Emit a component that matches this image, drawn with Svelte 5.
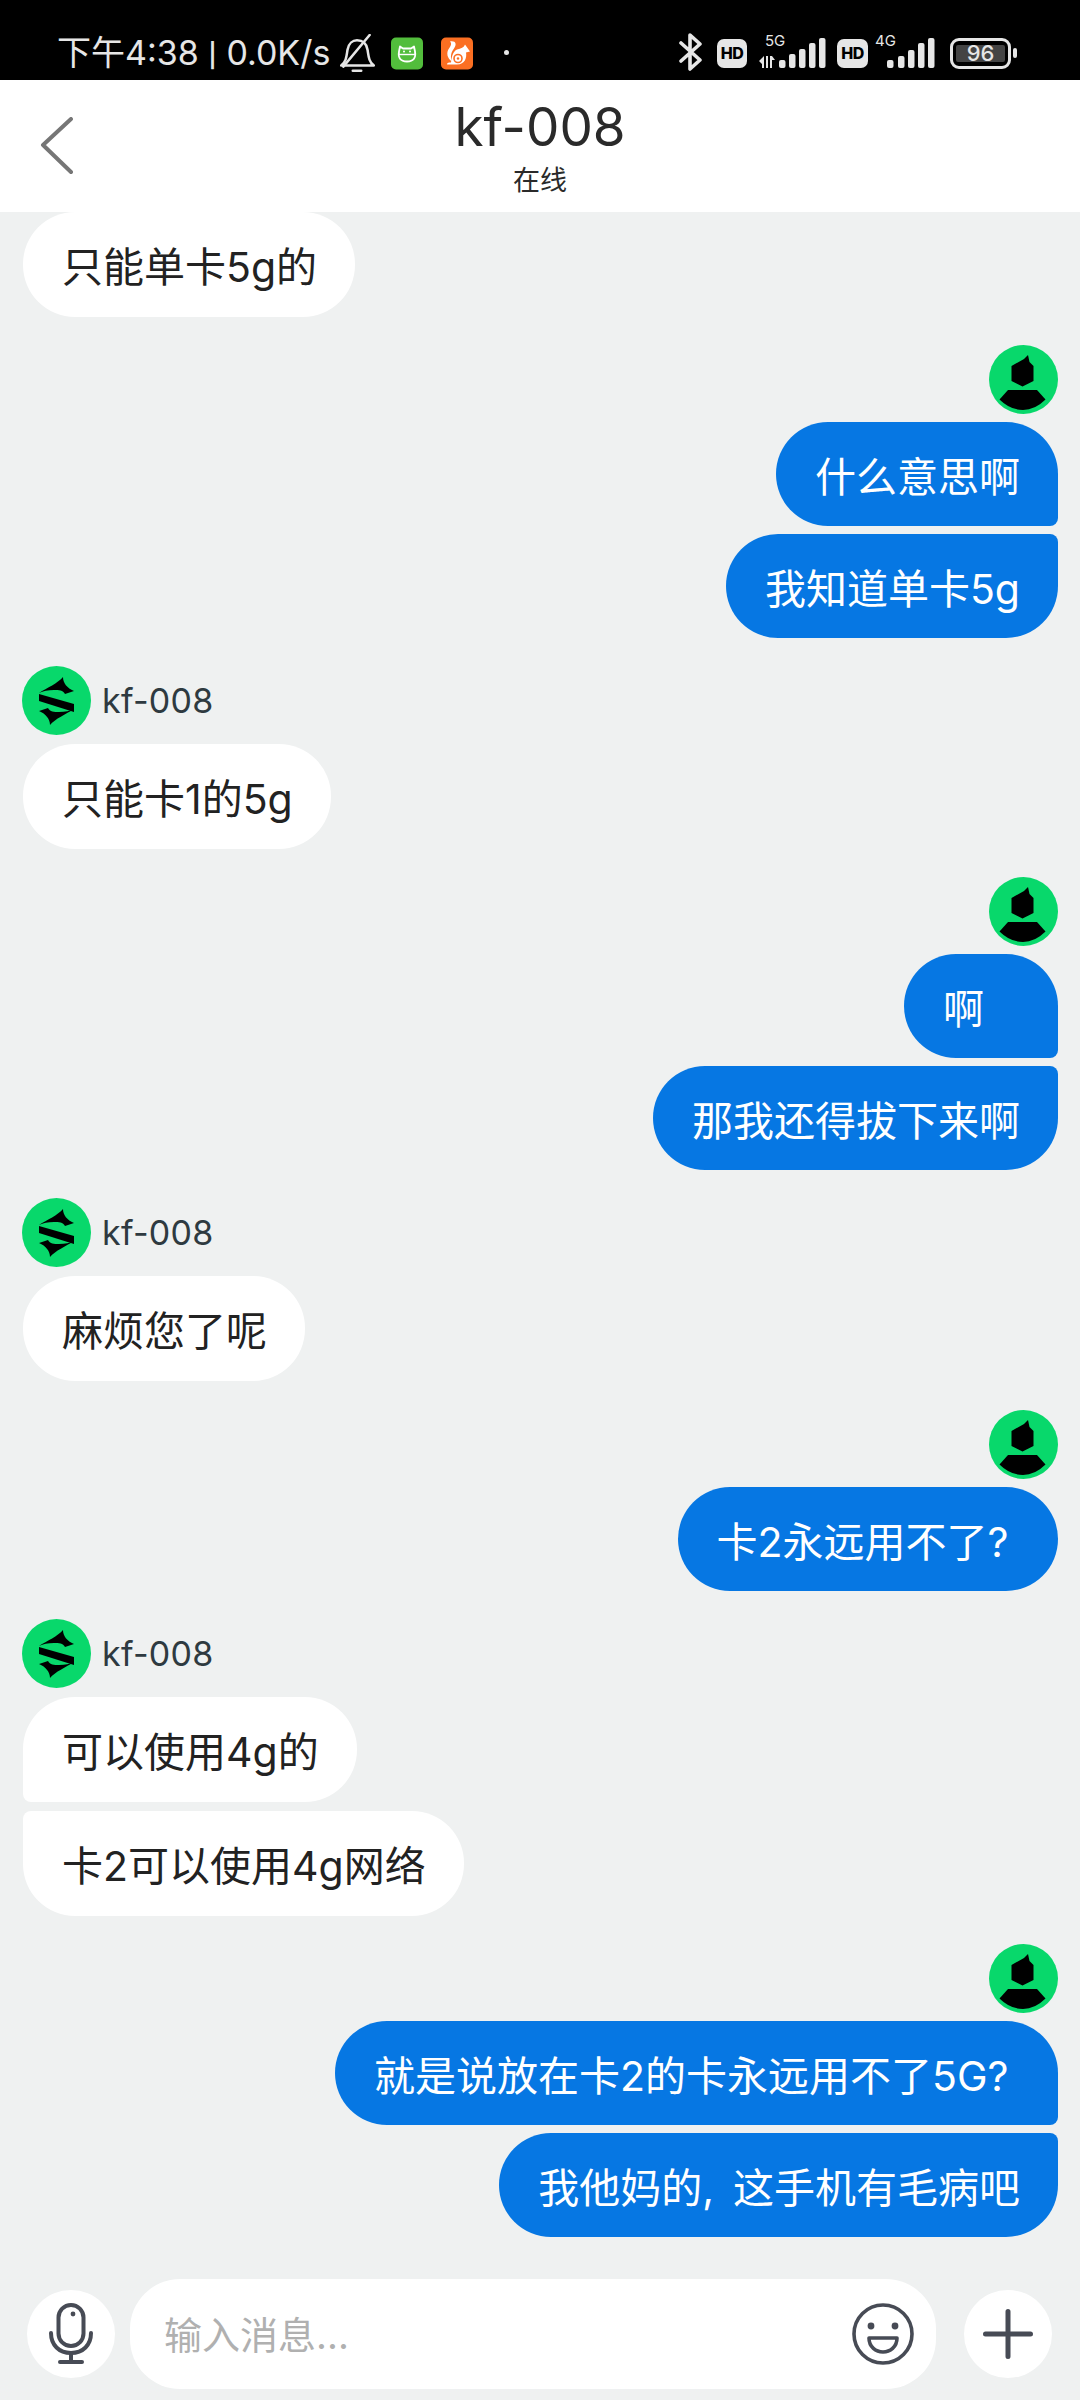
<script>
  const groups = [
    { side: "them", hideHead: true, bubbles: [{ text: "只能单卡5g的" }] },
    { side: "me", bubbles: [{ text: "什么意思啊", corner: "br" }, { text: "我知道单卡5g", corner: "tr" }] },
    { side: "them", bubbles: [{ text: "只能卡1的5g" }] },
    { side: "me", bubbles: [{ text: "啊", corner: "br" }, { text: "那我还得拔下来啊", corner: "tr" }] },
    { side: "them", bubbles: [{ text: "麻烦您了呢" }] },
    { side: "me", bubbles: [{ text: "卡2永远用不了? " }] },
    { side: "them", bubbles: [{ text: "可以使用4g的", corner: "bl" }, { text: "卡2可以使用4g网络", corner: "tl" }] },
    { side: "me", bubbles: [{ text: "就是说放在卡2的卡永远用不了5G? ", corner: "br" }, { text: "我他妈的,\u2009 这手机有毛病吧", corner: "tr" }] }
  ];

  const bars5g = [[20, 8], [30, 14], [40, 19], [50, 25], [60, 30]];
  const bars4g = [[0, 8], [11, 12], [21, 18], [31, 25], [41, 30]];
</script>

<div class="phone">
  <div class="status">
    <span class="clock">下午4:38 <span class="sep">|</span> 0.0K/s</span>
    <svg class="bell" width="36" height="40" viewBox="0 0 34 38" fill="none" stroke="#e6e6e6" stroke-width="2.4" stroke-linecap="round" stroke-linejoin="round">
      <path d="M2 30 C7 26 7 21 8 15 C9 9 13 6 17 6 C22 6 26 9 27 15 C28 21 28 26 33 30 Z" />
      <path d="M4 31 L29 1" />
      <path d="M13 35 H21" />
    </svg>
    <svg class="app app-green" width="32" height="33" viewBox="0 0 32 32">
      <rect width="32" height="32" rx="5" fill="#52bd3c" />
      <path d="M9 9 L12 11 H20 L23 9 L24 14 C25 20 23 24 16 24 C9 24 7 20 8 14 Z" fill="none" stroke="#fff" stroke-width="1.8" stroke-linejoin="round" />
      <path d="M8 17 H24" stroke="#fff" stroke-width="1.4" />
      <circle cx="13" cy="14" r="1" fill="#fff" />
      <circle cx="19" cy="14" r="1" fill="#fff" />
    </svg>
    <svg class="app app-orange" width="32" height="33" viewBox="0 0 32 32">
      <rect width="32" height="32" rx="5" fill="#fb6f22" />
      <path d="M9 4 C15 3 16 7 13 11 C10 15 9 19 11 24 C6 21 5 15 8 11 C10 8 11 6 9 4 Z" fill="#fff" />
      <path d="M16 12 C20 11 23 10 24 7 L29 14 L25 15 C26 20 24 27 16 27 H6 C6 25 8 25 10 25 C11 18 12 14 16 12 Z" fill="#fff" />
      <circle cx="17" cy="21" r="4" fill="none" stroke="#fb6f22" stroke-width="1.6" />
      <circle cx="17" cy="21" r="1.2" fill="#fb6f22" />
    </svg>
    <span class="dot"></span>
    <span class="spacer"></span>
    <svg class="bt" width="24" height="40" viewBox="0 0 24 40" fill="none" stroke="#e6e6e6" stroke-width="3.6" stroke-linejoin="round" stroke-linecap="round">
      <path d="M2 11 L21 28 L11 37 V3 L21 12 L2 29" />
    </svg>
    <span class="hd hd-first">HD</span>
    <div class="signal signal-5g">
      <span class="net">5G</span>
      <svg width="67" height="30" viewBox="0 0 67 30" fill="#e6e6e6">
        <path d="M0 23 L5 18 V30 H3 V26 Z M7 18 H9 V30 H7 Z M11 18 H13 L16 22 H13 V30 H11 Z" />
        {#each bars5g as bar}
          <rect x={bar[0]} y={30 - bar[1]} width="6.5" height={bar[1]} rx="2" />
        {/each}
      </svg>
    </div>
    <span class="hd hd-second">HD</span>
    <div class="signal signal-4g">
      <span class="net">4G</span>
      <svg width="48" height="30" viewBox="0 0 48 30" fill="#e6e6e6">
        {#each bars4g as bar}
          <rect x={bar[0]} y={30 - bar[1]} width="6.5" height={bar[1]} rx="2" />
        {/each}
      </svg>
    </div>
    <div class="battery">
      <span class="level">96</span>
    </div>
    <span class="tip"></span>
  </div>

  <header class="topbar">
    <svg class="back" width="34" height="58" viewBox="0 0 34 58" fill="none" stroke="#767676" stroke-width="4" stroke-linecap="round" stroke-linejoin="round">
      <path d="M31 2 L3 28 L31 55" />
    </svg>
    <div class="title">
      <span class="name">kf-008</span>
      <span class="state">在线</span>
    </div>
  </header>

  <div class="messages">
    {#each groups as group}
      <section class="group {group.side}">
        {#if !group.hideHead}
          <div class="head">
            {#if group.side === "me"}
              <svg class="avatar" width="69" height="69" viewBox="0 0 69 69">
                <circle cx="34.5" cy="34.5" r="34.5" fill="#08d86b" />
                <path d="M39 10 L40.5 17 L44.5 21 V36 L33.5 41.5 L22.5 36 V21 L35 14 Z" fill="#000" />
                <path d="M19 45 H48 L56.5 54.5 Q46 65 34 65 Q21 65 10.5 54.5 Z" fill="#000" />
              </svg>
            {:else}
              <svg class="avatar" width="69" height="69" viewBox="0 0 69 69">
                <circle cx="34.5" cy="34.5" r="34.5" fill="#08d86b" />
                <path d="M17 27 C25 22 36 17 41 11 C41 17 45 22 52 25 L43 28 C41 24 37 24 32 24 C26 24 21 25 17 27 Z" fill="#000" />
                <path d="M17 28 L52 38 V46 L17 35 Z" fill="#000" />
                <path d="M52 43 C44 48 33 53 28 59 C28 53 24 48 17 45 L26 42 C28 46 32 46 37 46 C43 46 48 45 52 43 Z" fill="#000" />
              </svg>
              <span class="sender">kf-008</span>
            {/if}
          </div>
        {/if}
        {#each group.bubbles as bubble}
          <div class="bubble {bubble.corner || ''}">{bubble.text}</div>
        {/each}
      </section>
    {/each}
  </div>

  <div class="composer">
    <button class="round" type="button" aria-label="语音">
      <svg width="44" height="62" viewBox="0 0 44 62" fill="none" stroke="#474b55" stroke-width="4" stroke-linecap="round">
        <rect x="9.5" y="2" width="25" height="41" rx="12.5" />
        <circle cx="24" cy="11" r="2.4" fill="#474b55" stroke="none" />
        <path d="M2 30 C2 42 10 50 22 50 C34 50 42 42 42 30" />
        <path d="M22 50 V58" />
        <path d="M11 59 H33" />
      </svg>
    </button>
    <div class="field">
      <span class="placeholder">输入消息...</span>
      <svg class="smile" width="62" height="62" viewBox="0 0 62 62" fill="none" stroke="#474b55" stroke-width="3.6">
        <circle cx="31" cy="31" r="29" />
        <circle cx="19" cy="23" r="3.4" fill="#474b55" stroke="none" />
        <circle cx="43" cy="23" r="3.4" fill="#474b55" stroke="none" />
        <path d="M17 35 H45 C45 44 38 49 31 49 C24 49 17 44 17 35 Z" stroke-linejoin="round" />
      </svg>
    </div>
    <button class="round" type="button" aria-label="更多">
      <svg width="50" height="50" viewBox="0 0 50 50" fill="none" stroke="#474b55" stroke-width="5" stroke-linecap="round">
        <path d="M25 2.5 V47.5 M2.5 25 H47.5" />
      </svg>
    </button>
  </div>
</div>

<style>
  :global(body) {
    margin: 0;
    background: #eff1f1;
  }

  .phone {
    width: 1080px;
    height: 2400px;
    display: flex;
    flex-direction: column;
    overflow: hidden;
    background: #eff1f1;
    font-family: "Inter", "Noto Sans CJK SC", sans-serif;
    color: #222;
  }

  .status {
    flex: none;
    height: 80px;
    box-sizing: border-box;
    padding: 32px 63px 0 57px;
    background: #000;
    color: #e6e6e6;
    display: flex;
    align-items: flex-start;
  }

  .clock {
    font-size: 34px;
    line-height: 40px;
    margin-top: 1px;
    white-space: nowrap;
  }

  .sep {
    font-family: "Roboto", sans-serif;
    font-weight: 500;
  }

  .bell {
    margin: 2px 0 0 9px;
  }

  .app {
    margin: 5px 0 0 16px;
  }

  .app-orange {
    margin-left: 18px;
  }

  .dot {
    width: 5px;
    height: 5px;
    margin: 18px 0 0 31px;
    border-radius: 50%;
    background: #e6e6e6;
  }

  .spacer {
    flex: 1;
  }

  .hd {
    width: 30px;
    height: 29px;
    margin-top: 7px;
    border-radius: 7px;
    background: #e6e6e6;
    color: #000;
    font-size: 16px;
    font-weight: 800;
    line-height: 29px;
    text-align: center;
    letter-spacing: -0.5px;
  }

  .hd-first {
    margin-left: 14px;
  }

  .hd-second {
    margin-left: 11px;
    width: 31px;
  }

  .signal {
    position: relative;
    height: 36px;
    display: flex;
    align-items: flex-end;
    justify-content: flex-end;
  }

  .signal-5g {
    width: 67px;
    margin-left: 12px;
  }

  .signal-4g {
    width: 60px;
    margin-left: 7px;
  }

  .net {
    position: absolute;
    top: 2px;
    left: 6px;
    font-size: 15px;
    line-height: 14px;
  }

  .signal-4g .net {
    left: 0;
  }

  .battery {
    width: 61px;
    height: 31px;
    margin: 6px 0 0 15px;
    box-sizing: border-box;
    border: 3px solid #e6e6e6;
    border-radius: 9px;
    padding: 4px 3px;
    display: flex;
  }

  .level {
    flex: 1;
    background: #444;
    border-radius: 2px;
    color: #e6e6e6;
    font-size: 22px;
    font-weight: 500;
    line-height: 17px;
    text-align: center;
  }

  .tip {
    width: 4px;
    height: 10px;
    margin: 16px 0 0 2px;
    border-radius: 2px;
    background: #e6e6e6;
  }

  .topbar {
    flex: none;
    position: relative;
    height: 132px;
    background: #fff;
    display: flex;
    align-items: center;
    justify-content: center;
  }

  .back {
    position: absolute;
    left: 40px;
    top: 37px;
  }

  .title {
    padding-top: 3px;
    display: flex;
    flex-direction: column;
    align-items: center;
  }

  .name {
    font-size: 53px;
    line-height: 62px;
    color: #2a2a2a;
  }

  .state {
    font-size: 27px;
    line-height: 36px;
    margin-top: 5px;
    color: #2a2a2a;
  }

  .messages {
    flex: 1;
    min-height: 0;
    overflow: hidden;
    display: flex;
    flex-direction: column;
    justify-content: flex-end;
    gap: 28.2px;
    padding: 0 22px 42px 23px;
  }

  .group {
    flex: none;
    display: flex;
    flex-direction: column;
    gap: 8px;
  }

  .group.me {
    align-items: flex-end;
  }

  .group.them {
    align-items: flex-start;
    gap: 9px;
  }

  .head {
    display: flex;
    align-items: center;
    gap: 11px;
  }

  .group.them .head {
    margin-left: -1px;
  }

  .avatar {
    display: block;
  }

  .sender {
    font-size: 34px;
    letter-spacing: 0.3px;
    color: #2e3a40;
  }

  .bubble {
    height: 104px;
    min-width: 154px;
    box-sizing: border-box;
    padding: 0 38px 0 39px;
    border-radius: 52px;
    background: #fff;
    font-size: 41px;
    line-height: 110px;
    white-space: pre;
  }

  .them .bubble {
    height: 105px;
  }

  .me .bubble {
    background: #0677e3;
    color: #fff;
  }

  .bubble.br {
    border-bottom-right-radius: 8px;
  }

  .bubble.tr {
    border-top-right-radius: 8px;
  }

  .bubble.bl {
    border-bottom-left-radius: 8px;
  }

  .bubble.tl {
    border-top-left-radius: 8px;
  }

  .composer {
    flex: none;
    height: 121px;
    box-sizing: border-box;
    padding: 0 28px 11px 27px;
    display: flex;
    align-items: center;
  }

  .round {
    flex: none;
    width: 88px;
    height: 88px;
    padding: 0;
    border: 0;
    background: #fff;
    display: flex;
    align-items: center;
    justify-content: center;
    border-radius: 50%;
  }

  .field {
    flex: 1;
    height: 110px;
    margin: 0 28px 0 15px;
    box-sizing: border-box;
    padding: 0 22px 0 34px;
    border-radius: 50px;
    background: #fff;
    display: flex;
    align-items: center;
    justify-content: space-between;
  }

  .placeholder {
    font-size: 38px;
    margin-bottom: 4px;
    color: #b0b0b0;
  }
</style>
